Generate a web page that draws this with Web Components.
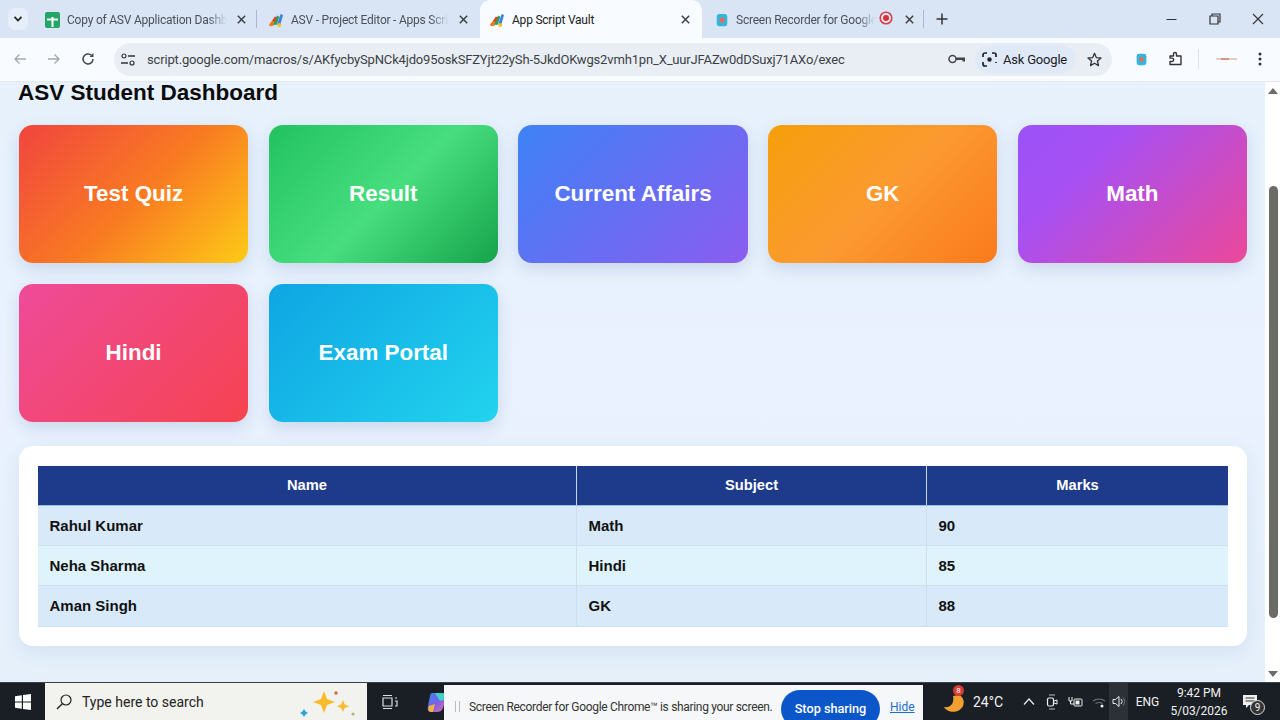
<!DOCTYPE html>
<html><head><meta charset="utf-8"><title>App Script Vault</title>
<style>
html,body{margin:0;padding:0;width:1280px;height:720px;overflow:hidden;font-family:"Liberation Sans",Arial,sans-serif}
body{display:flex;flex-direction:column;position:relative}
</style></head><body>
<svg width="0" height="0" style="position:absolute">
<defs>
<symbol id="as" viewBox="0 0 16 16">
<path d="M1 12.5 4.5 8c1.6-1.2 3.2.2 2.6 1.8L5.6 13.6c-1.4 1.4-4.6.8-4.6-1.1z" fill="#ef7d1e"/>
<path d="M5 12.4 9 3.6l2.4 1.2-3 8.2z" fill="#2c9f58"/>
<path d="M9 12.6 12.6 2l2.4 1-2.6 9.6z" fill="#3f7ee8"/>
<path d="M4.2 8.8 6.8 4.4l2 1-2 4.4z" fill="#d9432f"/>
<circle cx="11.3" cy="13" r="1.9" fill="#f2c21a"/>
</symbol>
<symbol id="rec" viewBox="0 0 16 16">
<rect x="2" y="1" width="12" height="14" rx="3" fill="#2fb8dc"/>
<circle cx="8" cy="8" r="3" fill="#ea6a5e"/>
</symbol>
</defs></svg>

<chrome-tabstrip>
<chrome-tab pad="9"><svg slot="icon" width="15" height="16" viewBox="0 0 15 16"><rect width="15" height="16" rx="2" fill="#23a566"/><path d="M6.5 5h2v1.6H13v2H8.5V15h-2V8.600H2v-2h4.500z" fill="#fff"/></svg>Copy of ASV Application Dashboard</chrome-tab>
<chrome-tab pad="10" sep><svg slot="icon" width="16" height="16"><use href="#as"/></svg>ASV - Project Editor - Apps Script</chrome-tab>
<chrome-tab pad="9" active><svg slot="icon" width="16" height="16"><use href="#as"/></svg>App Script Vault</chrome-tab>
<chrome-tab pad="13" rec><svg slot="icon" width="14" height="16"><use href="#rec"/></svg>Screen Recorder for Google Chrome</chrome-tab>
</chrome-tabstrip>

<chrome-toolbar>script.google.com/macros/s/AKfycbySpNCk4jdo95oskSFZYjt22ySh-5JkdOKwgs2vmh1pn_X_uurJFAZw0dDSuxj71AXo/exec</chrome-toolbar>

<page-frame>
<dash-title>ASV Student Dashboard</dash-title>
<tile-grid>
<dash-tile style="--g:linear-gradient(135deg,#f0453f 0%,#f97a22 52%,#fdcb17 100%)">Test Quiz</dash-tile>
<dash-tile style="--g:linear-gradient(135deg,#22c261 0%,#47de7e 52%,#16a34a 100%)">Result</dash-tile>
<dash-tile style="--g:linear-gradient(135deg,#3d82f6 0%,#8b5cf0 100%)">Current Affairs</dash-tile>
<dash-tile style="--g:linear-gradient(135deg,#f59f0b 0%,#fb9a30 50%,#fb7a1c 100%)">GK</dash-tile>
<dash-tile style="--g:linear-gradient(135deg,#9a52f7 0%,#a750f3 30%,#ec4899 100%)">Math</dash-tile>
<dash-tile style="--g:linear-gradient(135deg,#ee4b9a 0%,#f6434f 100%)">Hindi</dash-tile>
<dash-tile style="--g:linear-gradient(135deg,#0ea5e3 0%,#22d3ee 100%)">Exam Portal</dash-tile>
</tile-grid>
<marks-card>
<marks-row head><span>Name</span><span>Subject</span><span>Marks</span></marks-row>
<marks-row><span>Rahul Kumar</span><span>Math</span><span>90</span></marks-row>
<marks-row alt><span>Neha Sharma</span><span>Hindi</span><span>85</span></marks-row>
<marks-row><span>Aman Singh</span><span>GK</span><span>88</span></marks-row>
</marks-card>
</page-frame>

<win-taskbar></win-taskbar>
<share-bar>Screen Recorder for Google Chrome™ is sharing your screen.</share-bar>

<script>
function def(name, html, extra){
  const t=document.createElement('template');t.innerHTML=html;
  customElements.define(name,class extends HTMLElement{
    constructor(){super();this.attachShadow({mode:'open'}).appendChild(t.content.cloneNode(true));}
    connectedCallback(){ if(extra) extra(this); }
  });
}
const ico=(w,h,body,extra='')=>`<svg width="${w}" height="${h}" viewBox="0 0 ${w} ${h}" fill="none" ${extra}>${body}</svg>`;
const recIcon=(w,h)=>`<svg width="${w}" height="${h}" viewBox="0 0 16 16"><rect x="2" y="1" width="12" height="14" rx="3" fill="#2fb8dc"/><circle cx="8" cy="8" r="3" fill="#ea6a5e"/></svg>`;
const UI='Roboto,"Noto Sans",sans-serif';

def('chrome-tabstrip',`<style>
:host{display:flex;height:38px;background:#d9e5f5;color:#333;flex:none;align-items:stretch}
.chev{width:20px;height:22px;margin:8px 8px 0 8px;border-radius:7px;background:#e6eef9;display:flex;align-items:center;justify-content:center}
.tabs{display:flex}
.plus{margin:0 0 0 6px;width:24px;display:flex;align-items:center;justify-content:center}
.win{margin-left:auto;display:flex}
.win div{width:43px;display:flex;align-items:center;justify-content:center}
.win div:last-child{width:44px}
</style>
<div class="chev">${ico(10,8,'<path d="M1.5 1.8 5 5.500l3.500-3.700" stroke="#222" stroke-width="1.700"/>')}</div>
<div class="tabs"><slot></slot></div>
<div class="plus">${ico(12,12,'<path d="M6 .5v11M.5 6h11" stroke="#333" stroke-width="1.500"/>')}</div>
<div class="win">
<div>${ico(11,11,'<path d="M.5 5.500h10" stroke="#333"/>')}</div>
<div>${ico(12,12,'<path d="M3 3V1h8v8H9M1 3h8v8H1z" stroke="#333" stroke-width="1.200"/>')}</div>
<div>${ico(12,12,'<path d="M1 1l10 10M11 1 1 11" stroke="#333" stroke-width="1.100"/>')}</div>
</div>`);

def('chrome-tab',`<style>
:host{display:block;width:222px;box-sizing:border-box;position:relative;font:12px ${UI};color:#4a5158}
.in{height:38px;box-sizing:border-box;display:flex;align-items:center;padding:1px 10px 0 var(--p,9px)}
.t{flex:1;margin-left:7px;white-space:nowrap;overflow:hidden;letter-spacing:-.22px;-webkit-mask-image:linear-gradient(90deg,#000 88%,transparent);mask-image:linear-gradient(90deg,#000 88%,transparent)}
.r{display:none;margin:0 12px 0 4px}
.x{flex:none;margin-left:10px;margin-right:2px;display:flex}
:host([active]) .in{background:#f8fbff;border-radius:10px 10px 0 0;color:#222}
:host([active]) .t{-webkit-mask-image:none;mask-image:none;color:#222}
:host([rec]) .r{display:block}
:host([rec]) .t{margin-left:7px}
:host([rec]) .x{margin-left:0;margin-right:0}
.sep{position:absolute;right:0;top:10px;height:18px;border-right:1px solid #a9b9d2;display:none}
.sep2{position:absolute;left:-2px;top:10px;height:18px;border-right:1px solid #a9b9d2;display:none}
:host([sep]) .sep2{display:block}
:host([rec]) .sep{display:block}
.ic{display:flex;flex:none}
</style>
<div class="in"><span class="ic"><slot name="icon"></slot></span><span class="t"><slot></slot></span>
<span class="r">${ico(14,14,'<circle cx="7" cy="7" r="5.800" stroke="#d2414f" stroke-width="1.600" fill="#f5e4e8"/><circle cx="7" cy="7" r="3" fill="#d2313f"/>')}</span>
<span class="x">${ico(9,9,'<path d="M.8.8l7.400 7.400M8.200.8.800 8.200" stroke="#3c4043" stroke-width="1.500"/>')}</span></div>
<div class="sep"></div><div class="sep2"></div>`, el=>{
  el.style.setProperty('--p',(el.getAttribute('pad')||9)+'px');
});

def('chrome-toolbar',`<style>
:host{display:flex;align-items:center;height:44px;box-sizing:border-box;background:#f8fbff;flex:none;border-bottom:1px solid #e3e8f0;padding-bottom:1px}
.nav{width:34px;display:flex;justify-content:center;align-items:center}
.first{margin-left:3px}
.box{margin-left:9px;width:998px;height:33px;box-sizing:border-box;background:#e9eef5;border-radius:17px;display:flex;align-items:center;padding-left:7px;font:13px ${UI};color:#3b3f44}
.tune{width:14px;display:flex;margin-right:12px}
.url{flex:1;white-space:nowrap;letter-spacing:-.16px}
.key{margin-right:9px;display:flex}
.ask{width:100px;height:28px;box-sizing:border-box;border-radius:14px;background:#dfe9f8;display:flex;align-items:center;padding-left:7px;gap:6px;color:#202124;font-size:13px;letter-spacing:-.2px}
.star{margin:0 10px 0 12px;display:flex}
.r{display:flex;align-items:center;flex:1}
.e1{margin-left:23px;display:flex}
.e2{margin-left:20px;display:flex}
.div{margin-left:14px;height:20px;border-left:1px solid #dde2e9}
.pf{margin-left:17px;width:21px;display:flex}
.mn{margin-left:21px;display:flex}
</style>
<div class="nav first">${ico(14,12,'<path d="M13 6H2M6.500 1.500 2 6l4.500 4.500" stroke="#a5a9ae" stroke-width="1.400"/>')}</div>
<div class="nav">${ico(14,12,'<path d="M1 6h11M7.500 1.500 12 6l-4.500 4.500" stroke="#a5a9ae" stroke-width="1.400"/>')}</div>
<div class="nav">${ico(14,14,'<path d="M12 7a5 5 0 1 1-1.600-3.700" stroke="#444" stroke-width="1.500"/><path d="M12.500 1v4h-4z" fill="#444"/>')}</div>
<div class="box">
<span class="tune">${ico(14,13,'<circle cx="3" cy="3" r="2" stroke="#333" stroke-width="1.200"/><path d="M7 3h7M0 10h7" stroke="#333" stroke-width="1.300"/><circle cx="11" cy="10" r="2" stroke="#333" stroke-width="1.200"/>')}</span>
<span class="url"><slot></slot></span>
<span class="key">${ico(18,10,'<circle cx="4.500" cy="5" r="3.500" stroke="#444" stroke-width="1.500"/><path d="M8 3.500h9v4h-2.500V6H8z" fill="#444"/>')}</span>
<span class="ask">${ico(15,15,'<path d="M1 5V3a2 2 0 0 1 2-2h2M10 1h2a2 2 0 0 1 2 2v2M1 10v2a2 2 0 0 0 2 2h2M14 10v1" stroke="#222" stroke-width="1.700"/><circle cx="7.500" cy="7.500" r="2.200" fill="#222"/>')}<span>Ask Google</span></span>
<span class="star">${ico(15,15,'<path d="M7.500 1.300 9.300 5.600l4.700.4-3.600 3 1.100 4.600-4-2.400-4 2.400 1.100-4.600-3.600-3 4.700-.4z" stroke="#333" stroke-width="1.300" stroke-linejoin="round"/>')}</span>
</div>
<div class="r">
<span class="e1">${recIcon(13,15)}</span>
<span class="e2">${ico(16,16,'<path d="M2 5h3.500V3a1.500 1.500 0 0 1 3 0v2H13v8.500H2v-3h2a1.700 1.700 0 0 0 0-3.400H2z" stroke="#333" stroke-width="1.400" stroke-linejoin="round"/>')}</span>
<span class="div"></span>
<span class="pf">${ico(21,4,'<path d="M0 2h21" stroke="#d8c4bc" stroke-width="1.600"/><path d="M5 2h8" stroke="#d36b4d" stroke-width="1.200"/>')}</span>
<span class="mn">${ico(4,14,'<circle cx="2" cy="2" r="1.500" fill="#333"/><circle cx="2" cy="7" r="1.500" fill="#333"/><circle cx="2" cy="12" r="1.500" fill="#333"/>')}</span>
</div>`);

def('page-frame',`<style>
:host{display:flex;flex:1;min-height:0;background:linear-gradient(180deg,#e6f1fc,#e9f2fe 50%,#e5f0fb)}
.main{flex:1;min-width:0;padding:0 18px 0 19px;box-sizing:border-box}
.sb{width:15px;flex:none;background:#fff;display:flex;flex-direction:column;align-items:center;padding:6px 0 5px;box-sizing:border-box}
.th{margin-top:92px;width:9px;height:432px;border-radius:5px;background:#6a6c68;margin-left:2px}
.sp{flex:1}
</style>
<div class="main"><slot></slot></div>
<div class="sb">${ico(10,6,'<path d="M5 0l5 6H0z" fill="#6c6c6c"/>')}<div class="th"></div><div class="sp"></div>${ico(10,6,'<path d="M5 6l5-6H0z" fill="#6c6c6c"/>')}</div>`);

def('dash-title',`<style>
:host{display:block;height:43px;box-sizing:border-box;margin-left:-1px;font:bold 22.5px/21px "Liberation Sans",Arial,sans-serif;color:#0b0b0c}
</style><slot></slot>`);

def('tile-grid',`<style>
:host{display:grid;grid-template-columns:repeat(5,1fr);gap:21px 20.5px;grid-auto-rows:138px}
</style><slot></slot>`);

def('dash-tile',`<style>
:host{display:flex;align-items:center;justify-content:center;border-radius:14px;background:var(--g);color:#fff;font:bold 22.4px "Liberation Sans",Arial,sans-serif;box-shadow:0 6px 16px rgba(70,100,160,.18)}
</style><slot></slot>`);

def('marks-card',`<style>
:host{display:block;margin-top:24px;background:#fff;border-radius:14px;padding:20px 19px 20px 19px;height:200px;box-sizing:border-box;box-shadow:0 6px 18px rgba(70,100,160,.10)}
</style><slot></slot>`);

def('marks-row',`<style>
:host{display:grid;grid-template-columns:539px 350px 301px;height:40.4px;box-sizing:border-box;background:#d8e9fa;border-bottom:1px solid #cfdfee;font:bold 15px "Liberation Sans",Arial,sans-serif;color:#111}
:host([alt]){background:#dff3fc}
:host([head]){background:#1e3a8a;color:#fff;border-bottom:1px solid #9dbde0;height:39.5px;text-align:center;font-size:14.7px}
::slotted(span){display:flex;align-items:center;padding-left:11.5px;border-right:1px solid #d0deec;box-sizing:border-box}
::slotted(span:last-child){border-right:0}
:host([head]) ::slotted(span){justify-content:center;padding:0;border-right:1px solid #c8d6ea}
:host([head]) ::slotted(span:last-child){border-right:0}
</style><slot></slot>`);

def('win-taskbar',`<style>
:host{display:flex;align-items:stretch;height:38px;background:#191f24;flex:none;border-top:1px solid #3b4148;box-sizing:border-box;color:#f1f1f1;font:12px ${UI}}
.st{width:45px;display:flex;align-items:center;justify-content:center}
.se{width:322px;background:#f2f2ef;color:#222;display:flex;align-items:center;padding-left:11px;box-sizing:border-box;font-size:14px;gap:10px}
.sp{margin-left:auto;margin-right:7px;display:flex}
.tv{width:44px;display:flex;align-items:center;justify-content:center;margin-left:1px}
.co{display:flex;align-items:center;margin-left:15px}
.tray{margin-left:auto;display:flex;align-items:center;height:100%;margin-right:11px}
.w{display:flex;margin-right:7px}
.tmp{font-size:14px;width:42px}
.i{display:flex;justify-content:center;align-items:center;height:100%}
.spk{background:#2b3136;width:19px}
.eng{width:39px;text-align:center;font-size:12px}
.tm{width:64px;text-align:center;font-size:12px;line-height:18px}
.nt{width:38px;display:flex;justify-content:center;position:relative}
.n{position:absolute;left:19px;top:6px;width:13px;height:13px;border-radius:50%;border:1px solid #ddd;background:#333;font-size:10px;line-height:13px;text-align:center}
.b{position:absolute;left:9px;top:-5px;width:11px;height:11px;border-radius:50%;background:#d33d34;color:#fff;font-size:8px;line-height:11px;text-align:center}
</style>
<div class="st">${ico(16,16,'<path d="M0 2.200 6.800 1.200v6.200H0zM8 1 16 0v7.400H8zM0 8.600h6.800v6.200L0 13.800zM8 8.600h8V16l-8-1.100z" fill="#fff"/>')}</div>
<div class="se">${ico(16,16,'<circle cx="10" cy="6" r="5" stroke="#222" stroke-width="1.200"/><path d="M6.300 9.700 1 15" stroke="#222" stroke-width="1.400"/>')}<span>Type here to search</span>
<span class="sp">${ico(60,30,'<path d="M24 4l3 8 8 3-8 3-3 8-3-8-8-3 8-3z" fill="#f7bb2c"/><path d="M43 13l1.700 4.500 4.500 1.700-4.500 1.700L43 25l-1.700-4.100-4.500-1.700 4.500-1.700z" fill="#f7bb2c"/><path d="M4 22l1.600 2.400L8 26l-2.400 1.600L4 30l-1.600-2.400L0 26l2.400-1.600z" fill="#2ba4dc"/><circle cx="36" cy="6" r="1.800" fill="#d9694f"/><circle cx="53" cy="27" r="1.600" fill="#9dc56f"/>')}</span></div>
<div class="tv">${ico(16,16,'<path d="M1 1.500h9M1 14.500h9M1 4h9v8H1zM13 4h2M13 7h2v5h-2" stroke="#ddd" stroke-width="1.200"/>')}</div>
<div class="co">${ico(20,20,'<defs><linearGradient id="c" x1="0" y1="0" x2="1" y2="1"><stop offset="0" stop-color="#2f8cf0"/><stop offset=".5" stop-color="#7a5ee8"/><stop offset="1" stop-color="#ef6d9a"/></linearGradient></defs><path d="M5 1h10c3 0 5 3 4 6l-3 9c-1 3-4 4-6 4H4c-3 0-4-3-3-6l2-10C3.500 2 4 1 5 1z" fill="url(#c)"/><path d="M8 1h7c3 0 5 2 4 6l-6 2z" fill="#3fd0c8"/><path d="M2 14l6-2-2 8H4c-3 0-3-3-2-6z" fill="#f2b23c"/>')}</div>
<div class="tray">
<span class="w" style="position:relative">${ico(22,24,'<path d="M9 6c1.500 7-2 12-9 11 3 6 15 7 19-1 2-5 0-9-4-11z" fill="#f0a030"/>')}<span class="b">8</span></span>
<span class="tmp">24°C</span>
<span class="i" style="width:28px">${ico(12,7,'<path d="M1 6.500 6 1l5 5.500" stroke="#eee" stroke-width="1.200"/>')}</span>
<span class="i" style="width:18px">${ico(12,16,'<path d="M3 1h6M3 15h6" stroke="#bbb"/><rect x="1.500" y="4" width="6" height="8" rx="1.500" stroke="#eee" stroke-width="1.200"/><path d="M8 7l3-1v4l-3-1" stroke="#eee"/>')}</span>
<span class="i" style="width:28px">${ico(16,12,'<path d="M2 1v4h3V1M3.500 5v3h4" stroke="#eee"/><rect x="7" y="3" width="8" height="7" rx="1" stroke="#eee"/><rect x="8.500" y="4.500" width="4" height="4" fill="#eee"/>')}</span>
<span class="i" style="width:20px">${ico(14,13,'<path d="M1 6a11 11 0 0 1 12 0M3.500 8.500a7 7 0 0 1 7 0" stroke="#777" stroke-width="1.100"/><circle cx="10" cy="11" r="1.500" fill="#eee"/>')}</span>
<span class="i spk">${ico(14,13,'<path d="M1 4.500h2.500L7 1.500v10l-3.500-3H1z" stroke="#eee"/><path d="M9 4a3.500 3.500 0 0 1 0 5" stroke="#eee"/><path d="M11 2.500a6 6 0 0 1 0 8" stroke="#777"/>')}</span>
<span class="eng">ENG</span>
<span class="tm">9:42 PM<br>5/03/2026</span>
<span class="nt">${ico(16,15,'<path d="M1 1h14v10H7l-3 3v-3H1z" fill="#eee"/><path d="M3.500 4h9M3.500 7h9" stroke="#333"/>')}<span class="n">9</span></span>
</div>`);

def('share-bar',`<style>
:host{position:absolute;left:444px;top:685px;width:479px;height:35px;background:#f6f7f8;overflow:hidden;display:flex;align-items:flex-start;font:12px ${UI};color:#333;box-sizing:border-box;padding-left:11px}
.gr{margin-top:16px;width:5px;height:11px;border:solid #bbb;border-width:0 1px;margin-right:9px;flex:none;box-sizing:border-box}
.msg{margin-top:15px;white-space:nowrap;width:312px;flex:none;letter-spacing:-.32px}
.btn{margin-top:5px;width:99px;height:38px;border-radius:19px;background:#0b57c9;color:#fff;font-weight:500;font-size:12.7px;display:flex;align-items:flex-start;justify-content:center;padding-top:11px;box-sizing:border-box;flex:none}
.h{margin-top:15px;margin-left:10px;color:#1a6fd0;text-decoration:underline}
</style><span class="gr"></span><span class="msg"><slot></slot></span><span class="btn">Stop sharing</span><span class="h">Hide</span>`);
</script>
</body></html>
